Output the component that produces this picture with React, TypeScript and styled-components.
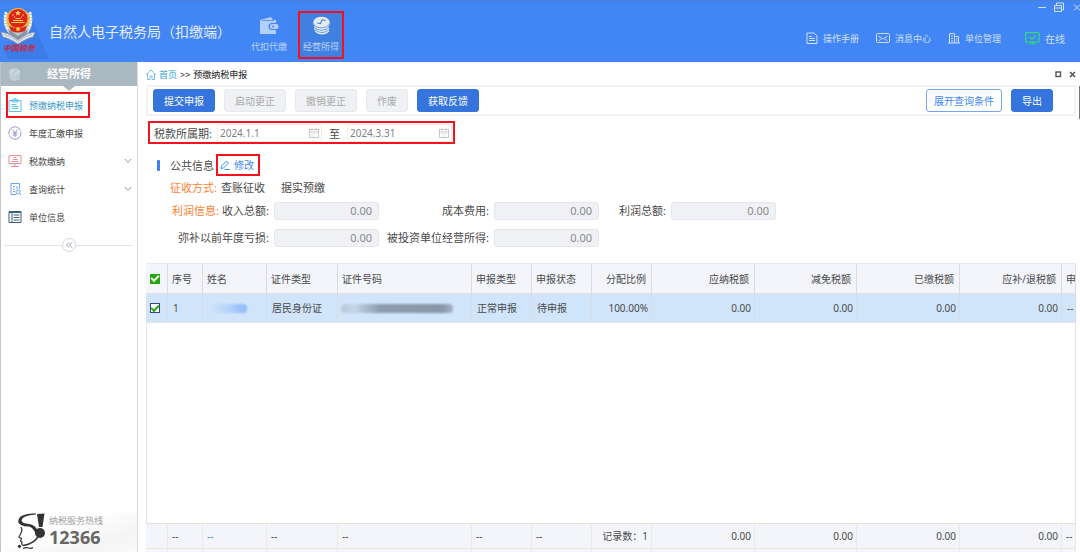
import React from 'react';
import styled, { createGlobalStyle, css } from 'styled-components';

const Global = createGlobalStyle`
  * { box-sizing: border-box; }
  html, body { margin: 0; }
  body, button, input {
    font-family: "Noto Sans", "Noto Sans CJK SC", sans-serif;
    font-size: 11px;
    color: #4a4a4a;
  }
  button { cursor: pointer; }
  a { color: inherit; text-decoration: none; }
  svg { display: block; flex: none; }
`;

const RED = '#f5121d';

const Page = styled.div`
  display: flex;
  flex-direction: column;
  min-height: 100vh;
  background: #fff;
`;

/* ---------- header ---------- */
const Header = styled.header`
  display: flex;
  height: 62px;
  flex: none;
  background: #4285f4;
  border-top: 1px solid #4a80da;
  color: #cfe0fd;
`;
const Title = styled.h1`
  margin: 0;
  font-size: 14px;
  font-weight: 400;
  line-height: 61px;
  color: #e4eefe;
  white-space: nowrap;
`;
const TopNav = styled.nav`
  display: flex;
  gap: 6px;
  margin: 10px 0 0 15px;
`;
const TopLink = styled.a<{ $active?: boolean }>`
  display: flex;
  flex-direction: column;
  align-items: center;
  gap: 6px;
  width: 46px;
  height: 48px;
  padding-top: 3px;
  border: 2px solid ${p => (p.$active ? RED : 'transparent')};
  background: ${p => (p.$active ? '#4080e2' : 'none')};
  font-size: 9px;
  line-height: 12px;
  white-space: nowrap;
  color: #bcd4fb;
`;
const HeaderRight = styled.div`
  display: flex;
  flex-direction: column;
  align-items: flex-end;
  margin-left: auto;
`;
const WindowButtons = styled.div`
  display: flex;
  gap: 7px;
  height: 12px;
`;
const BareButton = styled.button`
  display: flex;
  align-items: center;
  justify-content: center;
  padding: 0;
  border: 0;
  background: none;
  color: inherit;
`;
const Tools = styled.nav`
  display: flex;
  gap: 17px;
  padding: 16px 15px 0 0;
`;
const Tool = styled.a<{ $online?: boolean }>`
  display: flex;
  align-items: center;
  gap: 5px;
  height: 18px;
  margin-left: ${p => (p.$online ? '7px' : '0')};
  font-size: ${p => (p.$online ? '10px' : '9px')};
  white-space: nowrap;
`;

/* ---------- sidebar ---------- */
const Body = styled.div`
  display: flex;
  flex: 1;
`;
const Sidebar = styled.aside`
  display: flex;
  flex-direction: column;
  flex: none;
  width: 138px;
  border-left: 1px solid #c4c4c4;
  border-right: 1px solid #dcdcdc;
`;
const SideHead = styled.div`
  position: relative;
  display: flex;
  align-items: center;
  gap: 26px;
  height: 24px;
  padding-left: 7px;
  margin-bottom: 5px;
  background: #a9b8c1;
  color: #fff;
  font-weight: 700;
  line-height: 24px;
  svg { color: #c9d7dd; }
  &::after {
    content: '';
    position: absolute;
    left: 62px;
    top: 100%;
    border: 6px solid transparent;
    border-top: 5px solid #a9b8c1;
    border-bottom: 0;
  }
`;
const Menu = styled.ul`
  list-style: none;
  margin: 0;
  padding: 0 5px;
`;
const MenuItem = styled.li`
  display: flex;
  align-items: center;
  justify-content: space-between;
  height: 28px;
  color: #999;
`;
const MenuLink = styled.a<{ $active?: boolean }>`
  display: grid;
  grid-template-columns: 14px 54px;
  gap: 7px;
  align-items: center;
  height: 26px;
  padding: 0 5px 0 0;
  border: 2px solid ${p => (p.$active ? RED : 'transparent')};
  font-size: 9px;
  white-space: nowrap;
  color: ${p => (p.$active ? '#3a96c4' : '#444')};
`;
const Collapse = styled.div`
  display: flex;
  align-items: center;
  margin: 7px 4px 0 3px;
  &::before, &::after {
    content: '';
    flex: 1;
    border-top: 1px solid #e2e2e2;
  }
  button {
    width: 14px;
    height: 14px;
    border: 1px solid #d5d5dd;
    border-radius: 50%;
    color: #8c8ca8;
  }
`;
const Hotline = styled.div`
  display: flex;
  gap: 4px;
  margin-top: auto;
  padding: 0 0 2px 14px;
  background: linear-gradient(160deg, #fff 40%, #f4f4f4 75%, #fafafa);
`;
const HotlineText = styled.div`
  padding-top: 3px;
  font-size: 9px;
  line-height: 12px;
  color: #a0a0a0;
  strong {
    display: block;
    font-size: 18px;
    line-height: 20px;
    color: #666;
  }
`;

/* ---------- content ---------- */
const Content = styled.main`
  position: relative;
  display: flex;
  flex-direction: column;
  flex: 1;
  min-width: 0;
  padding: 0 4px 0 8px;
`;
const ScrollThumb = styled.div`
  position: absolute;
  top: 24px;
  right: 0;
  width: 1px;
  height: 33px;
  background: #777;
`;
const Crumbs = styled.nav`
  display: flex;
  align-items: center;
  gap: 3px;
  height: 23px;
  padding-top: 2px;
  font-size: 9px;
  color: #222;
  a { color: #2a9fd6; }
`;
const TabTools = styled.div`
  display: flex;
  gap: 7px;
  margin-left: auto;
  color: #555;
`;
const Toolbar = styled.div`
  display: flex;
  gap: 9px;
  padding: 2px 21px 2px 5px;
  border: 2px solid #f3f3f3;
`;
const Button = styled.button<{ $kind?: 'primary' | 'outline'; $push?: boolean }>`
  height: 23px;
  padding: 0 10px;
  border-radius: 3px;
  border: 1px solid #e6e8ec;
  background: #f0f1f4;
  color: #aaa;
  font-size: 10px;
  line-height: 20px;
  white-space: nowrap;
  ${p => p.$push && css`margin-left: auto;`}
  ${p => p.$kind === 'primary' && css`
    border-color: #3474dc;
    background: #3474dc;
    color: #fff;
  `}
  ${p => p.$kind === 'outline' && css`
    padding: 0 7px;
    border-color: #75a6f7;
    background: #fff;
    color: #4285f4;
  `}
`;
const Period = styled.div`
  display: flex;
  align-items: center;
  align-self: flex-start;
  gap: 5px;
  height: 23px;
  margin: 5px 0 0 2px;
  padding: 0 1px 0 4px;
  border: 2px solid ${RED};
  span { padding: 0 2px; }
`;
const DateBox = styled.div`
  display: flex;
  align-items: center;
  width: 105px;
  height: 18px;
  padding: 0 2px;
  border: 1px solid #ececec;
  border-radius: 2px;
  color: #bbb;
  input {
    flex: 1;
    min-width: 0;
    padding: 0;
    border: 0;
    background: none;
    outline: 0;
    font-size: 10px;
    line-height: 14px;
    color: #808080;
  }
`;
const SectionHead = styled.div`
  display: flex;
  align-items: center;
  height: 22px;
  margin: 10px 0 0 11px;
  h2 {
    margin: 0;
    padding-left: 10px;
    font-size: 11px;
    font-weight: 400;
  }
  &::before {
    content: '';
    width: 3px;
    height: 11px;
    border-radius: 1px;
    background: #3f80ee;
  }
`;
const EditButton = styled.button`
  display: flex;
  align-items: center;
  gap: 4px;
  height: 22px;
  margin-left: 2px;
  padding: 0 4px 0 2px;
  border: 2px solid ${RED};
  background: none;
  font-size: 10px;
  line-height: 16px;
  color: #4285f4;
`;
const Method = styled.div`
  display: flex;
  gap: 4px;
  padding-left: 24px;
  margin-top: 1px;
  line-height: 22px;
  span + span { margin-left: 12px; }
`;
const Accent = styled.b`
  font-weight: 400;
  color: #ff7f32;
`;
const Fields = styled.div`
  display: grid;
  grid-template-columns: 104px 105px 115px 105px 72px 105px;
  row-gap: 9px;
  align-items: center;
  margin: 3px 0 16px;
  padding-left: 24px;
`;
const FieldLabel = styled.label`
  display: flex;
  justify-content: flex-end;
  gap: 3px;
  padding-right: 5px;
  line-height: 18px;
  white-space: nowrap;
`;
const FieldInput = styled.input`
  width: 100%;
  height: 18px;
  padding: 0 6px 2px;
  border: 1px solid #e4e6ea;
  border-radius: 3px;
  background: #eff1f5;
  text-align: right;
  line-height: 14px;
  color: #8a8a8a;
`;

/* ---------- grid ---------- */
const GridPanel = styled.section`
  display: flex;
  flex-direction: column;
  flex: 1;
  justify-content: space-between;
  border-top: 1px solid #e6e8ec;
  box-shadow: inset 1px 0 #e4e6ea, inset -1px 0 #e4e6ea;
`;
const Table = styled.table`
  width: 100%;
  table-layout: fixed;
  border-collapse: separate;
  border-spacing: 0;
  font-size: 10px;
`;
const Row = styled.tr<{ $kind: 'head' | 'data' | 'total' | 'rest' }>`
  height: ${p => ({ head: 30, data: 29, total: 26, rest: 3 })[p.$kind]}px;
  background: ${p => (p.$kind === 'data' ? '#d1e5fa' : '#f3f5fa')};
  th, td {
    overflow: hidden;
    padding: 0 ${p => (p.$kind === 'head' ? '5px 0 4px' : p.$kind === 'data' ? '3px 0 5px' : '3px 0 4px')};
    border-right: 1px solid ${p => (p.$kind === 'data' || p.$kind === 'head' ? '#d9dde2' : '#ebebdf')};
    border-bottom: ${p => (p.$kind === 'rest' ? '0' : `1px solid ${p.$kind === 'total' ? '#e8e8dc' : '#dfe3e8'}`)};
    font-weight: 400;
    line-height: 14px;
    white-space: nowrap;
    text-align: left;
  }
  th:first-child, td:first-child { padding: 0 0 0 4px; }
  th:nth-child(n + 8):nth-child(-n + 12),
  td:nth-child(n + 8):nth-child(-n + 12) { text-align: right; }
  ${p => p.$kind === 'total' && css`
    td { border-top: 1px solid #e2e2dc; }
    td:nth-child(3) { color: #4285f4; }
  `}
`;
const Check = styled.input<{ $solid?: boolean }>`
  appearance: none;
  display: grid;
  place-items: center;
  width: 10px;
  height: 10px;
  margin: 0;
  border: 1px solid ${p => (p.$solid ? '#22a80e' : '#33487a')};
  background: ${p => (p.$solid ? '#22a80e' : '#fff')};
  &:checked::after {
    content: '';
    width: 6px;
    height: 3px;
    margin-bottom: 2px;
    border: solid ${p => (p.$solid ? '#fff' : '#22a80e')};
    border-width: 0 0 2px 2px;
    transform: rotate(-45deg);
  }
`;
const Masked = styled.span<{ $tone: 'blue' | 'grey' }>`
  display: block;
  height: 9px;
  border-radius: 4px;
  filter: blur(1px);
  ${p => p.$tone === 'blue'
    ? css`width: 39px; background: linear-gradient(90deg, #d1e5fa, #b3d2fa 55%, #8ab8fb);`
    : css`width: 112px; margin-left: -2px; background: linear-gradient(90deg, #b9c9da, #c3d6ea 12%, #8d9dae 35%, #8797a8 90%, #a3b3c5);`}
`;

/* ---------- drawings ---------- */
const Emblem = () => (
  <svg width="49" height="61" viewBox="0 1 49 61">
    <path d="M33 22 L49 59 H9 L4 50 Z" fill="#3c7ce8" />
    <path d="M5 13 Q1 28 12 36 L18 39 L25 36 Q35 28 31 13 Z" fill="#c4c9d4" />
    <path d="M6 12 Q2 27 14 36 M30 12 Q34 27 22 36" stroke="#f3f0dc" strokeWidth="2.6" strokeDasharray="2 1" fill="none" />
    <path d="M8 29 L18 36 L28 29 L26 36 L18 41 L10 36 Z" fill="#8794a8" />
    <path d="M1 32 Q8 33 12 36 L18 40 L24 36 Q28 33 35 32 L33 37 Q27 38 18 44 Q9 38 3 37 Z" fill="#e4e8ee" stroke="#8b95a5" strokeWidth=".7" />
    <path d="M4 34.500 Q10 35.500 18 41.500 Q26 35.500 32 34.500" fill="none" stroke="#9aa4b3" strokeWidth=".7" />
    <circle cx="18" cy="19.500" r="11.500" fill="#e9b93c" />
    <circle cx="18" cy="18.500" r="9.500" fill="#e0201b" />
    <path d="M18 10 l.9 2 2.100 .2 -1.600 1.400 .5 2 -1.900 -1.100 -1.900 1.100 .5 -2 -1.600 -1.400 2.100 -.2z" fill="#ffd84a" />
    <path d="M11.500 22.500 h13 M13 20.500 h10 M15.500 18.500 h5" stroke="#ffd84a" strokeWidth="1.100" />
    <g fill="#ffd84a"><circle cx="13" cy="15" r=".8" /><circle cx="23" cy="15" r=".8" /><circle cx="14.500" cy="17" r=".7" /><circle cx="21.500" cy="17" r=".7" /></g>
    <path d="M9 26 Q18 30 27 26 L25 31 Q18 34 11 31 Z" fill="#d42a1c" />
    <circle cx="18" cy="29" r="2" fill="#f0c040" />
    <text x="3" y="51" fontSize="8" fontWeight="700" fontStyle="italic" fill="#c52a48">中国税务</text>
  </svg>
);
const Wallet = () => (
  <svg width="20" height="19" viewBox="0 0 20 19" fill="#b4cffa">
    <path d="M1 4 L12 1 L14 4 H17 V7 H13 A3 3 0 0 0 13 14 H17 V18 H1 Z" />
    <path d="M3 4.500 H15" stroke="#4285f4" strokeWidth=".8" />
    <rect x="11" y="8" width="8.500" height="5" rx="2" />
    <circle cx="14" cy="10.500" r="1" fill="#4285f4" />
  </svg>
);
const Coins = ({ size = 19, line = '#4080e2', fill = 'currentColor' }: { size?: number; line?: string; fill?: string }) => (
  <svg width={size} height={size} viewBox="0 0 20 20">
    <path d="M1.500 6 V9 L2.500 10 L2 13 L3 16 Q6 19.500 10.500 19.500 Q15 19.500 18 16.500 V13 L17.500 11 L18.500 9 V6 Z" fill={fill} />
    <ellipse cx="10" cy="6" rx="8.500" ry="5.300" fill={fill} />
    <path d="M1.500 8.500 Q4 12.500 10 12.500 Q16 12.500 18.500 8.500 M2 11.500 Q5 15 10 15 Q15.500 15 18 11.500 M2.500 14 Q5.500 17.400 10.500 17.400 Q15.500 17.400 18 14" fill="none" stroke={line} strokeWidth=".8" />
    <path d="M5.500 7.300 L9 8 L10.500 4 L14.500 4.800" fill="none" stroke={line} strokeWidth="1.200" />
  </svg>
);
type IconProps = { w?: number; h?: number; box?: string; color?: string; sw?: number; children: React.ReactNode };
const Icon = ({ w = 12, h = 12, box, color = 'currentColor', sw = 1, children }: IconProps) => (
  <svg width={w} height={h} viewBox={box || `0 0 ${w} ${h}`} fill="none" stroke={color} strokeWidth={sw} aria-hidden="true">
    {children}
  </svg>
);
const Calendar = () => (
  <Icon w={10} h={10} sw={0.8}>
    <rect x=".5" y="1.500" width="9" height="8" />
    <path d="M.5 4 h9 M3 0 v2.500 M7 0 v2.500 M2.500 6 h1 M4.500 6 h1 M6.500 6 h1 M2.500 8 h1 M4.500 8 h1" />
  </Icon>
);
const Chevron = () => (
  <Icon w={8} h={6}><path d="M1 1 L4 4.500 L7 1" /></Icon>
);
const HotlineLogo = () => (
  <svg width="30" height="38" viewBox="14 512 30 38">
    <path d="M36 514 L43.500 513.500 L41.500 527 H38 Z" fill="#333" />
    <circle cx="39" cy="533" r="5" fill="#333" />
    <path d="M35 513.500 Q24 513 19 517 Q15 522 20 525 Q23 526.500 28 526.500 Q32 527.500 34.500 533.500 L37 531 Q34 524.500 28 524 Q21 523.500 20.500 520.500 Q21 515.500 35 514.500 Z" fill="#333" />
    <path d="M20 527 Q21.500 530.500 20.500 532 L18 537 L20.500 538.500 L19.500 541 L21 542 Q20 545 22.500 545.500" fill="none" stroke="#333" strokeWidth="1.200" />
    <path d="M37 537 Q32 544 22 545.500" fill="none" stroke="#333" strokeWidth="1.500" />
    <circle cx="18.500" cy="546.300" r="1.600" fill="#333" />
    <path d="M22 548.500 Q25 547 28 548 Q30 549 32 547.500" fill="none" stroke="#333" strokeWidth="1.300" />
  </svg>
);

/* ---------- data ---------- */
const WIDTHS = [22, 35, 64, 71, 134, 60, 60, 60, 103, 102, 103, 102, 14];
const HEADINGS = ['序号', '姓名', '证件类型', '证件号码', '申报类型', '申报状态', '分配比例', '应纳税额', '减免税额', '已缴税额', '应补/退税额', '申'];
const TOTALS = ['', '--', '--', '--', '--', '--', '--', '记录数：1', '0.00', '0.00', '0.00', '0.00', '--'];
const Cols = () => <colgroup>{WIDTHS.map((w, i) => <col key={i} style={{ width: w }} />)}</colgroup>;

const Amount = ({ id, label, lead }: { id: string; label: string; lead?: string }) => (
  <>
    <FieldLabel htmlFor={id}>{lead && <Accent>{lead}</Accent>}{label}</FieldLabel>
    <FieldInput id={id} defaultValue="0.00" readOnly />
  </>
);

export default function App() {
  return (
    <Page>
      <Global />
      <Header>
        <Emblem />
        <Title>自然人电子税务局（扣缴端）</Title>
        <TopNav>
          <TopLink href="#withhold"><Wallet />代扣代缴</TopLink>
          <TopLink href="#business" $active><Coins fill="#e6ecec" />经营所得</TopLink>
        </TopNav>
        <HeaderRight>
          <WindowButtons>
            <BareButton aria-label="最小化"><Icon w={10} h={10}><path d="M1 5.500 h8" /></Icon></BareButton>
            <BareButton aria-label="还原"><Icon w={10} h={10}><path d="M.5 3.500 h7 v6 h-7z M.5 6 h7 M2.500 3 v-2 h7 v7 h-2" /></Icon></BareButton>
            <BareButton aria-label="关闭"><Icon w={9} h={10}><path d="M3 2.500 L9 8.500 M9 2.500 L3 8.500" /></Icon></BareButton>
          </WindowButtons>
          <Tools>
            <Tool href="#manual"><Icon><path d="M1 1 h7 l3 3 v7.500 h-10z M3 4.500 h3 M3 6.500 h6 M3 8.500 h6" /></Icon>操作手册</Tool>
            <Tool href="#messages"><Icon w={14} h={12}><rect x=".5" y="1.500" width="13" height="9" rx="1" /><path d="M2.500 4 L7 7 L11.500 4 M2.500 9 L5 7 M11.500 9 L9 7" /></Icon>消息中心</Tool>
            <Tool href="#units"><Icon><path d="M1.500 11 V1.500 h5 V11 M6.500 4.500 h4 V11 M0 11 h12 M3 4 h2 M3 6.500 h2 M3 9 h2 M8 7 h1.500 M8 9 h1.500" /></Icon>单位管理</Tool>
            <Tool href="#online" $online><Icon w={15} h={13} color="#35d97b" sw={1.2}><rect x=".6" y=".6" width="13.500" height="9.500" rx="1" /><path d="M4.500 5 L7 7.300 L10.500 3.500 M7.500 10 v2 M4.500 12 h6" /></Icon>在线</Tool>
          </Tools>
        </HeaderRight>
      </Header>

      <Body>
        <Sidebar>
          <SideHead><Coins size={13} line="#a9b8c1" />经营所得</SideHead>
          <Menu>
            <MenuItem>
              <MenuLink href="#prepay" $active>
                <Icon w={14} h={14} color="#5cbfee"><path d="M1 2.500 h12 v11 h-12z M4 4 v-2 h2 v-1.500 h2 v1.500 h2 v2z M3.500 6.500 h5 M3.500 8.500 h7 M3.500 10.500 h7" /></Icon>
                预缴纳税申报
              </MenuLink>
            </MenuItem>
            <MenuItem>
              <MenuLink href="#annual">
                <Icon w={14} h={14} color="#9a94d0"><path d="M12.500 4.500 A6 6 0 0 0 1.200 8.500 M1.500 9.500 A6 6 0 0 0 12.800 5.500 M4.500 3.500 L7 7 L9.500 3.500 M7 7 v4 M4.700 7 h4.600 M4.700 9 h4.600" /></Icon>
                年度汇缴申报
              </MenuLink>
            </MenuItem>
            <MenuItem>
              <MenuLink href="#payment">
                <Icon w={14} h={14} color="#e58e92"><path d="M1 1.500 h12 v8 h-12z M7 9.500 v3 M3 12.500 h8 M3.500 7.500 h7 M4.500 5.500 h5 M5.500 3.500 h3" /></Icon>
                税款缴纳
              </MenuLink>
              <Chevron />
            </MenuItem>
            <MenuItem>
              <MenuLink href="#stats">
                <Icon w={14} h={14} color="#6aa3f2"><path d="M11.500 7 V1.500 h-8.500 v11 h5 M5 4.500 h2 M5 7 h2 M5 9.500 h2 M9 4 v3" /><circle cx="10" cy="10" r="2" /><path d="M11.500 11.500 l1.500 1.500" /></Icon>
                查询统计
              </MenuLink>
              <Chevron />
            </MenuItem>
            <MenuItem>
              <MenuLink href="#unit">
                <Icon w={14} h={14} color="#3d6079"><path d="M1 1.500 h12 v11 h-12z M1 2.500 h12 M4 2 v10 M5.500 5 h6 M5.500 7.500 h6 M5.500 10 h6" /></Icon>
                单位信息
              </MenuLink>
            </MenuItem>
          </Menu>
          <Collapse>
            <BareButton aria-label="收起菜单"><Icon w={8} h={8} sw={0.9}><path d="M4 1.500 L1.500 4 L4 6.500 M7 1.500 L4.500 4 L7 6.500" /></Icon></BareButton>
          </Collapse>
          <Hotline>
            <HotlineLogo />
            <HotlineText>纳税服务热线<strong>12366</strong></HotlineText>
          </Hotline>
        </Sidebar>

        <Content>
          <ScrollThumb />
          <Crumbs>
            <Icon w={10} h={11} color="#7cc0e6"><path d="M0 6 L5 1 L10 6 M1.500 5 V10.500 h2.500 V7 h2 v3.500 h2.500 V5" /></Icon>
            <a href="#home">首页</a>
            <span>&gt;&gt;</span>
            <span>预缴纳税申报</span>
            <TabTools>
              <BareButton aria-label="最大化"><Icon w={7} h={7} sw={1.4}><rect x="1" y="1" width="4.500" height="4.500" /></Icon></BareButton>
              <BareButton aria-label="关闭标签"><Icon w={7} h={7} sw={1.6}><path d="M1 1 L6 6 M6 1 L1 6" /></Icon></BareButton>
            </TabTools>
          </Crumbs>
          <Toolbar>
            <Button $kind="primary">提交申报</Button>
            <Button>启动更正</Button>
            <Button>撤销更正</Button>
            <Button>作废</Button>
            <Button $kind="primary">获取反馈</Button>
            <Button $kind="outline" $push>展开查询条件</Button>
            <Button $kind="primary">导出</Button>
          </Toolbar>
          <Period>
            <label htmlFor="from">税款所属期:</label>
            <DateBox><input id="from" defaultValue="2024.1.1" /><Calendar /></DateBox>
            <span>至</span>
            <DateBox><input aria-label="至" defaultValue="2024.3.31" /><Calendar /></DateBox>
          </Period>
          <SectionHead>
            <h2>公共信息</h2>
            <EditButton>
              <Icon w={10} h={10} color="#2f9bea"><path d="M1 8.500 L1.500 6 L6.500 1 L8.500 3 L3.500 8 Z M4.500 9.500 h5.500" /></Icon>
              修改
            </EditButton>
          </SectionHead>
          <Method><Accent>征收方式:</Accent><span>查账征收</span><span>据实预缴</span></Method>
          <Fields>
            <Amount id="income" lead="利润信息:" label="收入总额:" />
            <Amount id="cost" label="成本费用:" />
            <Amount id="profit" label="利润总额:" />
            <Amount id="loss" label="弥补以前年度亏损:" />
            <Amount id="invested" label="被投资单位经营所得:" />
          </Fields>
          <GridPanel>
            <Table>
              <Cols />
              <thead>
                <Row $kind="head">
                  <th><Check type="checkbox" defaultChecked $solid aria-label="全选" /></th>
                  {HEADINGS.map(h => <th key={h}>{h}</th>)}
                </Row>
              </thead>
              <tbody>
                <Row $kind="data">
                  <td><Check type="checkbox" defaultChecked aria-label="选择第1行" /></td>
                  <td>1</td>
                  <td><Masked $tone="blue" /></td>
                  <td>居民身份证</td>
                  <td><Masked $tone="grey" /></td>
                  <td>正常申报</td>
                  <td>待申报</td>
                  <td>100.00%</td>
                  <td>0.00</td>
                  <td>0.00</td>
                  <td>0.00</td>
                  <td>0.00</td>
                  <td>--</td>
                </Row>
              </tbody>
            </Table>
            <Table>
              <Cols />
              <tbody>
                <Row $kind="total">{TOTALS.map((t, i) => <td key={i}>{t}</td>)}</Row>
                <Row $kind="rest">{TOTALS.map((_, i) => <td key={i} />)}</Row>
              </tbody>
            </Table>
          </GridPanel>
        </Content>
      </Body>
    </Page>
  );
}
